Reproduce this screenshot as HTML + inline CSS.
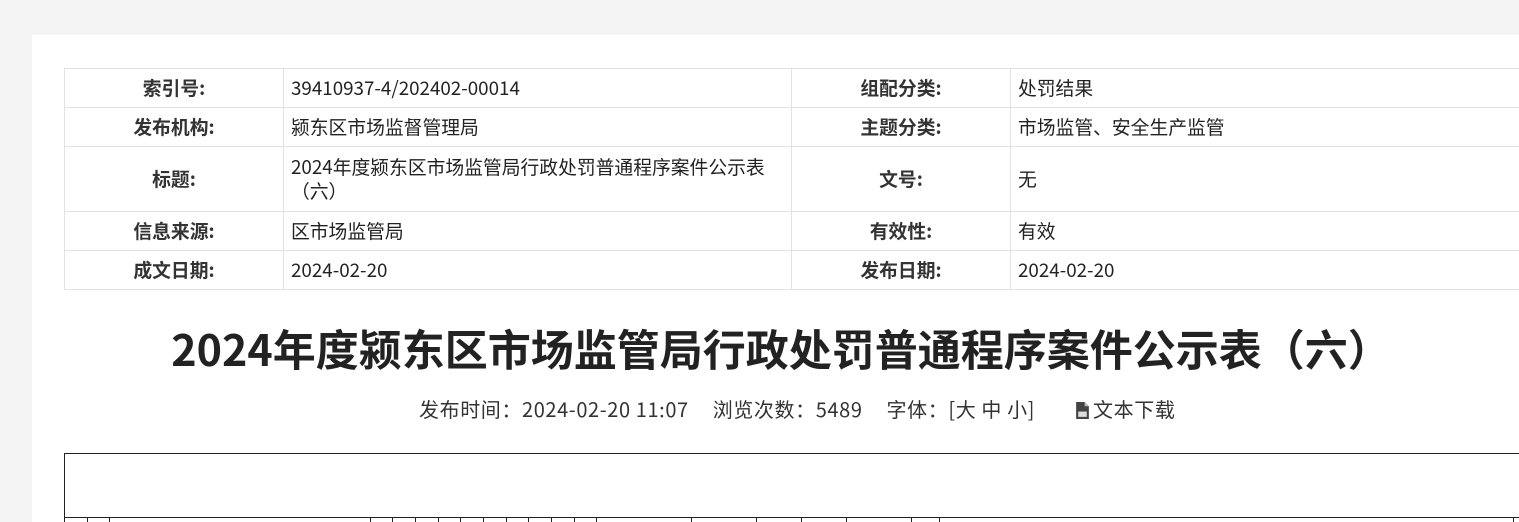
<!DOCTYPE html>
<html><head><meta charset="utf-8"><style>
html,body{margin:0;width:1519px;height:522px;overflow:hidden}
body{background:#f4f4f4;font-family:"Noto Sans CJK SC","Liberation Sans",sans-serif;color:#222;position:relative}
.panel{position:absolute;left:32px;top:35px;width:1487px;height:487px;background:#fff}
table.info{position:absolute;left:64px;top:68px;border-collapse:collapse;font-size:18.8px;table-layout:fixed;width:1700px}
table.info td{border:1px solid #e2e2e2;padding:0 7px;height:38px;line-height:24px}
td.l{font-weight:bold;text-align:center;color:#333}
h1{position:absolute;left:64px;width:1434px;top:318px;margin:0;text-align:center;font-size:43px;font-weight:bold;color:#222;line-height:60px;white-space:nowrap}
.meta{position:absolute;left:419px;top:394px;font-size:20px;letter-spacing:0.6px;color:#333;white-space:nowrap;line-height:30px}
.meta span{margin-left:24px}
.box{position:absolute;left:64px;top:453px;width:1600px;height:63px;border:1px solid #222;border-right:none}
.v{position:absolute;top:517px;width:1px;height:10px;background:#222}
</style></head><body>
<div class="panel"></div>
<table class="info">
<colgroup><col style="width:219px"><col style="width:508px"><col style="width:219px"><col style="width:754px"></colgroup>
<tr><td class="l">索引号:</td><td>39410937-4/202402-00014</td><td class="l">组配分类:</td><td>处罚结果</td></tr>
<tr><td class="l">发布机构:</td><td>颍东区市场监督管理局</td><td class="l">主题分类:</td><td>市场监管、安全生产监管</td></tr>
<tr><td class="l" style="height:64px">标题:</td><td>2024年度颍东区市场监管局行政处罚普通程序案件公示表（六）</td><td class="l">文号:</td><td>无</td></tr>
<tr><td class="l">信息来源:</td><td>区市场监管局</td><td class="l">有效性:</td><td>有效</td></tr>
<tr><td class="l">成文日期:</td><td>2024-02-20</td><td class="l">发布日期:</td><td>2024-02-20</td></tr>
</table>
<h1>2024年度颍东区市场监管局行政处罚普通程序案件公示表（六）</h1>
<div class="meta">发布时间：2024-02-20 11:07<span>浏览次数：5489</span><span>字体：[大 中 小]</span><span style="margin-left:40px"><svg width="15" height="17" viewBox="0 0 14 16" style="vertical-align:-2px;margin-right:3px"><path d="M1 0h8l4 4v12H1z" fill="#444"/><path d="M9 0v4h4" fill="#bbb"/><rect x="3" y="9" width="8" height="5" fill="#ddd"/></svg>文本下载</span></div>
<div class="box"></div>
<div class="v" style="left:64px"></div><div class="v" style="left:87px"></div><div class="v" style="left:109px"></div><div class="v" style="left:370px"></div><div class="v" style="left:392px"></div><div class="v" style="left:415px"></div><div class="v" style="left:438px"></div><div class="v" style="left:460px"></div><div class="v" style="left:483px"></div><div class="v" style="left:506px"></div><div class="v" style="left:528px"></div><div class="v" style="left:551px"></div><div class="v" style="left:574px"></div><div class="v" style="left:596px"></div><div class="v" style="left:691px"></div><div class="v" style="left:756px"></div><div class="v" style="left:801px"></div><div class="v" style="left:846px"></div><div class="v" style="left:911px"></div><div class="v" style="left:939px"></div><div class="v" style="left:1513px"></div>
</body></html>
